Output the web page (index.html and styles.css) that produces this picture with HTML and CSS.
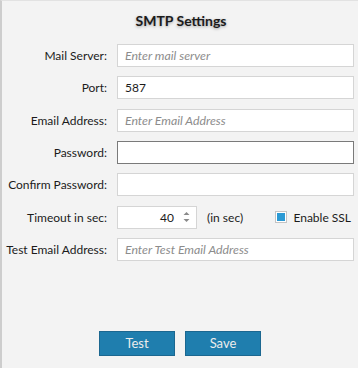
FILE: index.html
```html
<!DOCTYPE html>
<html lang="en">
<head>
  <meta charset="UTF-8">
  <title>SMTP Settings</title>
  <link rel="stylesheet" href="styles.css">
</head>
<body>
  <div class="window">
    <div class="title">SMTP Settings</div>

    <!-- Settings form -->
    <div class="form">
      <label class="label">Mail Server:</label>
      <div class="field"><span class="hint">Enter mail server</span></div>

      <label class="label">Port:</label>
      <div class="field">587</div>

      <label class="label">Email Address:</label>
      <div class="field"><span class="hint">Enter Email Address</span></div>

      <label class="label">Password:</label>
      <div class="field focused"></div>

      <label class="label">Confirm Password:</label>
      <div class="field"></div>

      <label class="label">Timeout in sec:</label>
      <div class="timeout-row">
        <div class="spinner">
          <span class="spin-value">40</span>
          <svg class="spin-arrows" width="9" height="14" viewBox="0 0 9 14">
            <path d="M1.5 5 L4.5 2 L7.5 5 Z" fill="#8a8a8a"/>
            <path d="M1.5 9 L4.5 12 L7.5 9 Z" fill="#8a8a8a"/>
          </svg>
        </div>
        <span class="unit">(in sec)</span>
        <span class="check"><span class="check-box"><span class="check-mark"></span></span>Enable SSL</span>
      </div>

      <label class="label">Test Email Address:</label>
      <div class="field"><span class="hint">Enter Test Email Address</span></div>
    </div>

    <div class="buttons">
      <button class="btn">Test</button>
      <button class="btn">Save</button>
    </div>
  </div>
</body>
</html>
```

FILE: styles.css
```css
body {
  margin: 0;
  padding: 0;
  font-family: Lato, "Noto Sans", sans-serif;
  font-size: 12px;
  color: #1b1b1b;
  background: #f3f3f3;
}

.window {
  box-sizing: border-box;
  width: 358px;
  height: 368px;
  border-left: 2px solid #cdcdcd;
  border-top: 1px solid #e2e2e2;
  background: #f3f3f3;
}

.title {
  text-align: center;
  font-weight: bold;
  font-size: 14px;
  padding-top: 11px;
  height: 32px;
  box-sizing: border-box;
  padding-left: 2px;
  text-shadow: 0 1px 3px rgba(0, 0, 0, 0.35);
}

/* Form grid */
.form {
  display: grid;
  grid-template-columns: 105px 237px;
  grid-auto-rows: 23px;
  column-gap: 10px;
  row-gap: 9.33px;
  margin-top: 11px;
}

.label {
  display: flex;
  align-items: center;
  justify-content: flex-end;
  white-space: nowrap;
}

.field {
  box-sizing: border-box;
  border: 1px solid #d5d5d5;
  background: #fff;
  display: flex;
  align-items: center;
  padding-left: 7px;
}

.field.focused {
  border-color: #7a7a7a;
}

.hint {
  font-style: italic;
  font-size: 12.3px;
  color: #8c8c8c;
}

.timeout-row {
  display: flex;
  align-items: center;
}

.spinner {
  box-sizing: border-box;
  width: 80px;
  height: 23px;
  border: 1px solid #d5d5d5;
  background: #fff;
  display: flex;
  align-items: center;
  justify-content: flex-end;
  padding-right: 5px;
}

.spin-value {
  margin-right: 8px;
}

.unit {
  margin-left: 10px;
}

.check {
  display: flex;
  align-items: center;
  margin-left: auto;
  margin-right: 3px;
}

.check-box {
  box-sizing: border-box;
  width: 12px;
  height: 12px;
  border: 1px solid #c4c4c4;
  background: #fff;
  padding: 1px;
  margin-right: 6px;
}

.check-mark {
  display: block;
  width: 8px;
  height: 8px;
  background: #2b9ad4;
}

/* Bottom buttons */
.buttons {
  display: flex;
  justify-content: center;
  gap: 10px;
  margin-top: 70px;
}

.btn {
  width: 76px;
  height: 25px;
  background: #1f7eae;
  border: 1px solid #1b6790;
  color: #ececec;
  font-family: Lato, "Noto Sans", sans-serif;
  font-size: 13px;
  padding: 0;
}
```
